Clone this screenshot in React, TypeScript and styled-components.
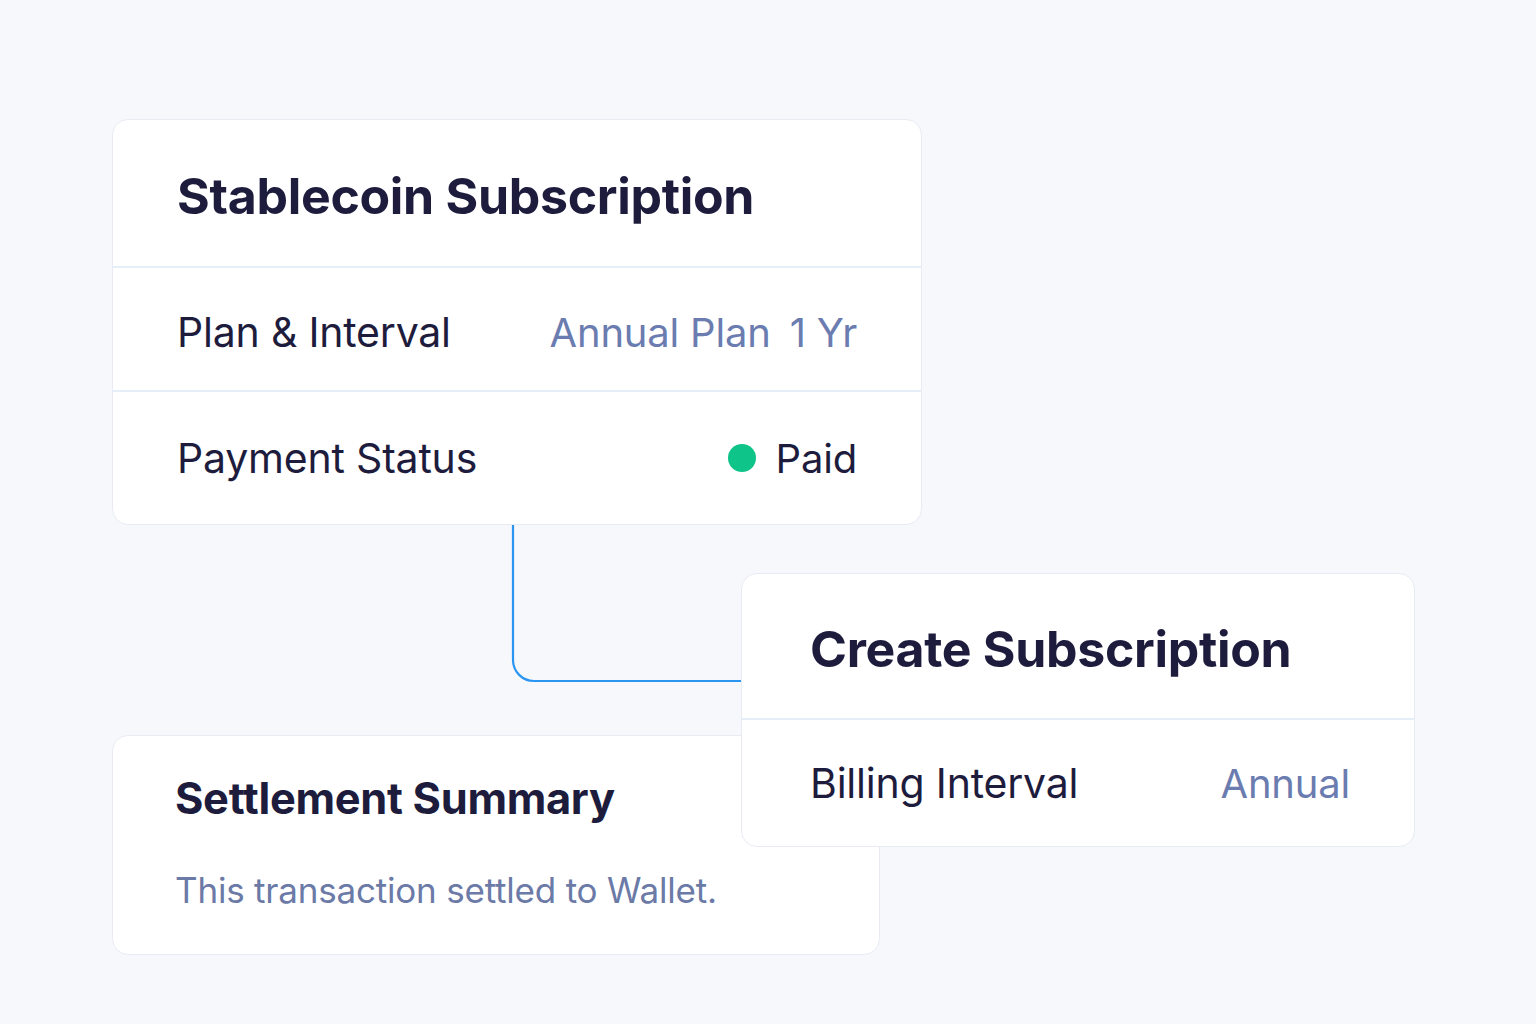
import React from 'react'
import styled, { createGlobalStyle } from 'styled-components'

const GlobalStyle = createGlobalStyle`
  *, *::before, *::after {
    box-sizing: border-box;
  }
  html, body {
    margin: 0;
    padding: 0;
    background: #f7f8fc;
    font-family: Inter, "Noto Sans", sans-serif;
    -webkit-font-smoothing: antialiased;
  }
`

const Canvas = styled.div`
  position: relative;
  width: 1536px;
  height: 1024px;
  overflow: hidden;
  background: #f7f8fc;
`

// cards are nodes on a free canvas, so they keep their own coordinates
const Card = styled.div<{ x: number; y: number; w: number; h?: number; z?: number }>`
  position: absolute;
  left: ${({ x }) => x}px;
  top: ${({ y }) => y}px;
  width: ${({ w }) => w}px;
  height: ${({ h }) => (h ? `${h}px` : 'auto')};
  z-index: ${({ z }) => z ?? 1};
  background: #ffffff;
  border: 1px solid #e8ebf3;
  border-radius: 16px;
  display: flex;
  flex-direction: column;
`

const Header = styled.div<{ h: number; pl: number }>`
  height: ${({ h }) => h}px;
  padding: 6px 0 0 ${({ pl }) => pl}px;
  display: flex;
  align-items: center;
  border-bottom: 2px solid #e6eefa;
`

const Title = styled.h2<{ size: number }>`
  margin: 0;
  font-size: ${({ size }) => size}px;
  font-weight: 700;
  color: #1e1c3d;
  letter-spacing: -0.3px;
`

const Row = styled.div<{ h: number; pl: number; pr: number; pt?: number; last?: boolean }>`
  height: ${({ h }) => h}px;
  padding: ${({ pt }) => pt ?? 0}px ${({ pr }) => pr}px 0 ${({ pl }) => pl}px;
  display: flex;
  align-items: center;
  justify-content: space-between;
  border-bottom: ${({ last }) => (last ? 'none' : '2px solid #e6eefa')};
`

const Label = styled.span`
  font-size: 41px;
  font-weight: 400;
  color: #1e1c3d;
  letter-spacing: -0.2px;
`

const Value = styled.span<{ muted?: boolean; gap?: number }>`
  display: flex;
  align-items: center;
  gap: ${({ gap }) => gap ?? 20}px;
  font-size: 40px;
  font-weight: 400;
  color: ${({ muted }) => (muted ? '#6b7cb0' : '#1e1c3d')};
  letter-spacing: -0.2px;
`

const Dot = styled.span`
  width: 28px;
  height: 28px;
  border-radius: 50%;
  background: #0fc488;
`

const SummaryBody = styled.div`
  padding: 36px 0 0 62px;
  display: flex;
  flex-direction: column;
`

const SummaryText = styled.p`
  margin: 45px 0 0;
  font-size: 35px;
  color: #6b7aa6;
  letter-spacing: -0.2px;
`

const Connector = styled.svg`
  position: absolute;
  left: 0;
  top: 0;
  z-index: 0;
`

export default function App() {
  return (
    <>
      <GlobalStyle />
      <Canvas>
        <Connector width={1536} height={1024}>
          <path d="M513 524 V660 A21 21 0 0 0 534 681 H742" fill="none" stroke="#2b95f2" strokeWidth={2.2} />
        </Connector>

        <Card x={112} y={119} w={810} z={2}>
          <Header h={148} pl={64}>
            <Title size={50}>Stablecoin Subscription</Title>
          </Header>
          <Row h={124} pl={64} pr={64} pt={6}>
            <Label>Plan &amp; Interval</Label>
            <Value muted gap={19}>
              <span>Annual Plan</span>
              <span>1 Yr</span>
            </Value>
          </Row>
          <Row h={132} pl={64} pr={64} last>
            <Label>Payment Status</Label>
            <Value>
              <Dot />
              Paid
            </Value>
          </Row>
        </Card>

        <Card x={112} y={735} w={768} h={220} z={1}>
          <SummaryBody>
            <Title size={43.4}>Settlement Summary</Title>
            <SummaryText>This transaction settled to Wallet.</SummaryText>
          </SummaryBody>
        </Card>

        <Card x={741} y={573} w={674} z={3}>
          <Header h={146} pl={68}>
            <Title size={50}>Create Subscription</Title>
          </Header>
          <Row h={126} pl={68} pr={64} last>
            <Label>Billing Interval</Label>
            <Value muted>Annual</Value>
          </Row>
        </Card>
      </Canvas>
    </>
  )
}
